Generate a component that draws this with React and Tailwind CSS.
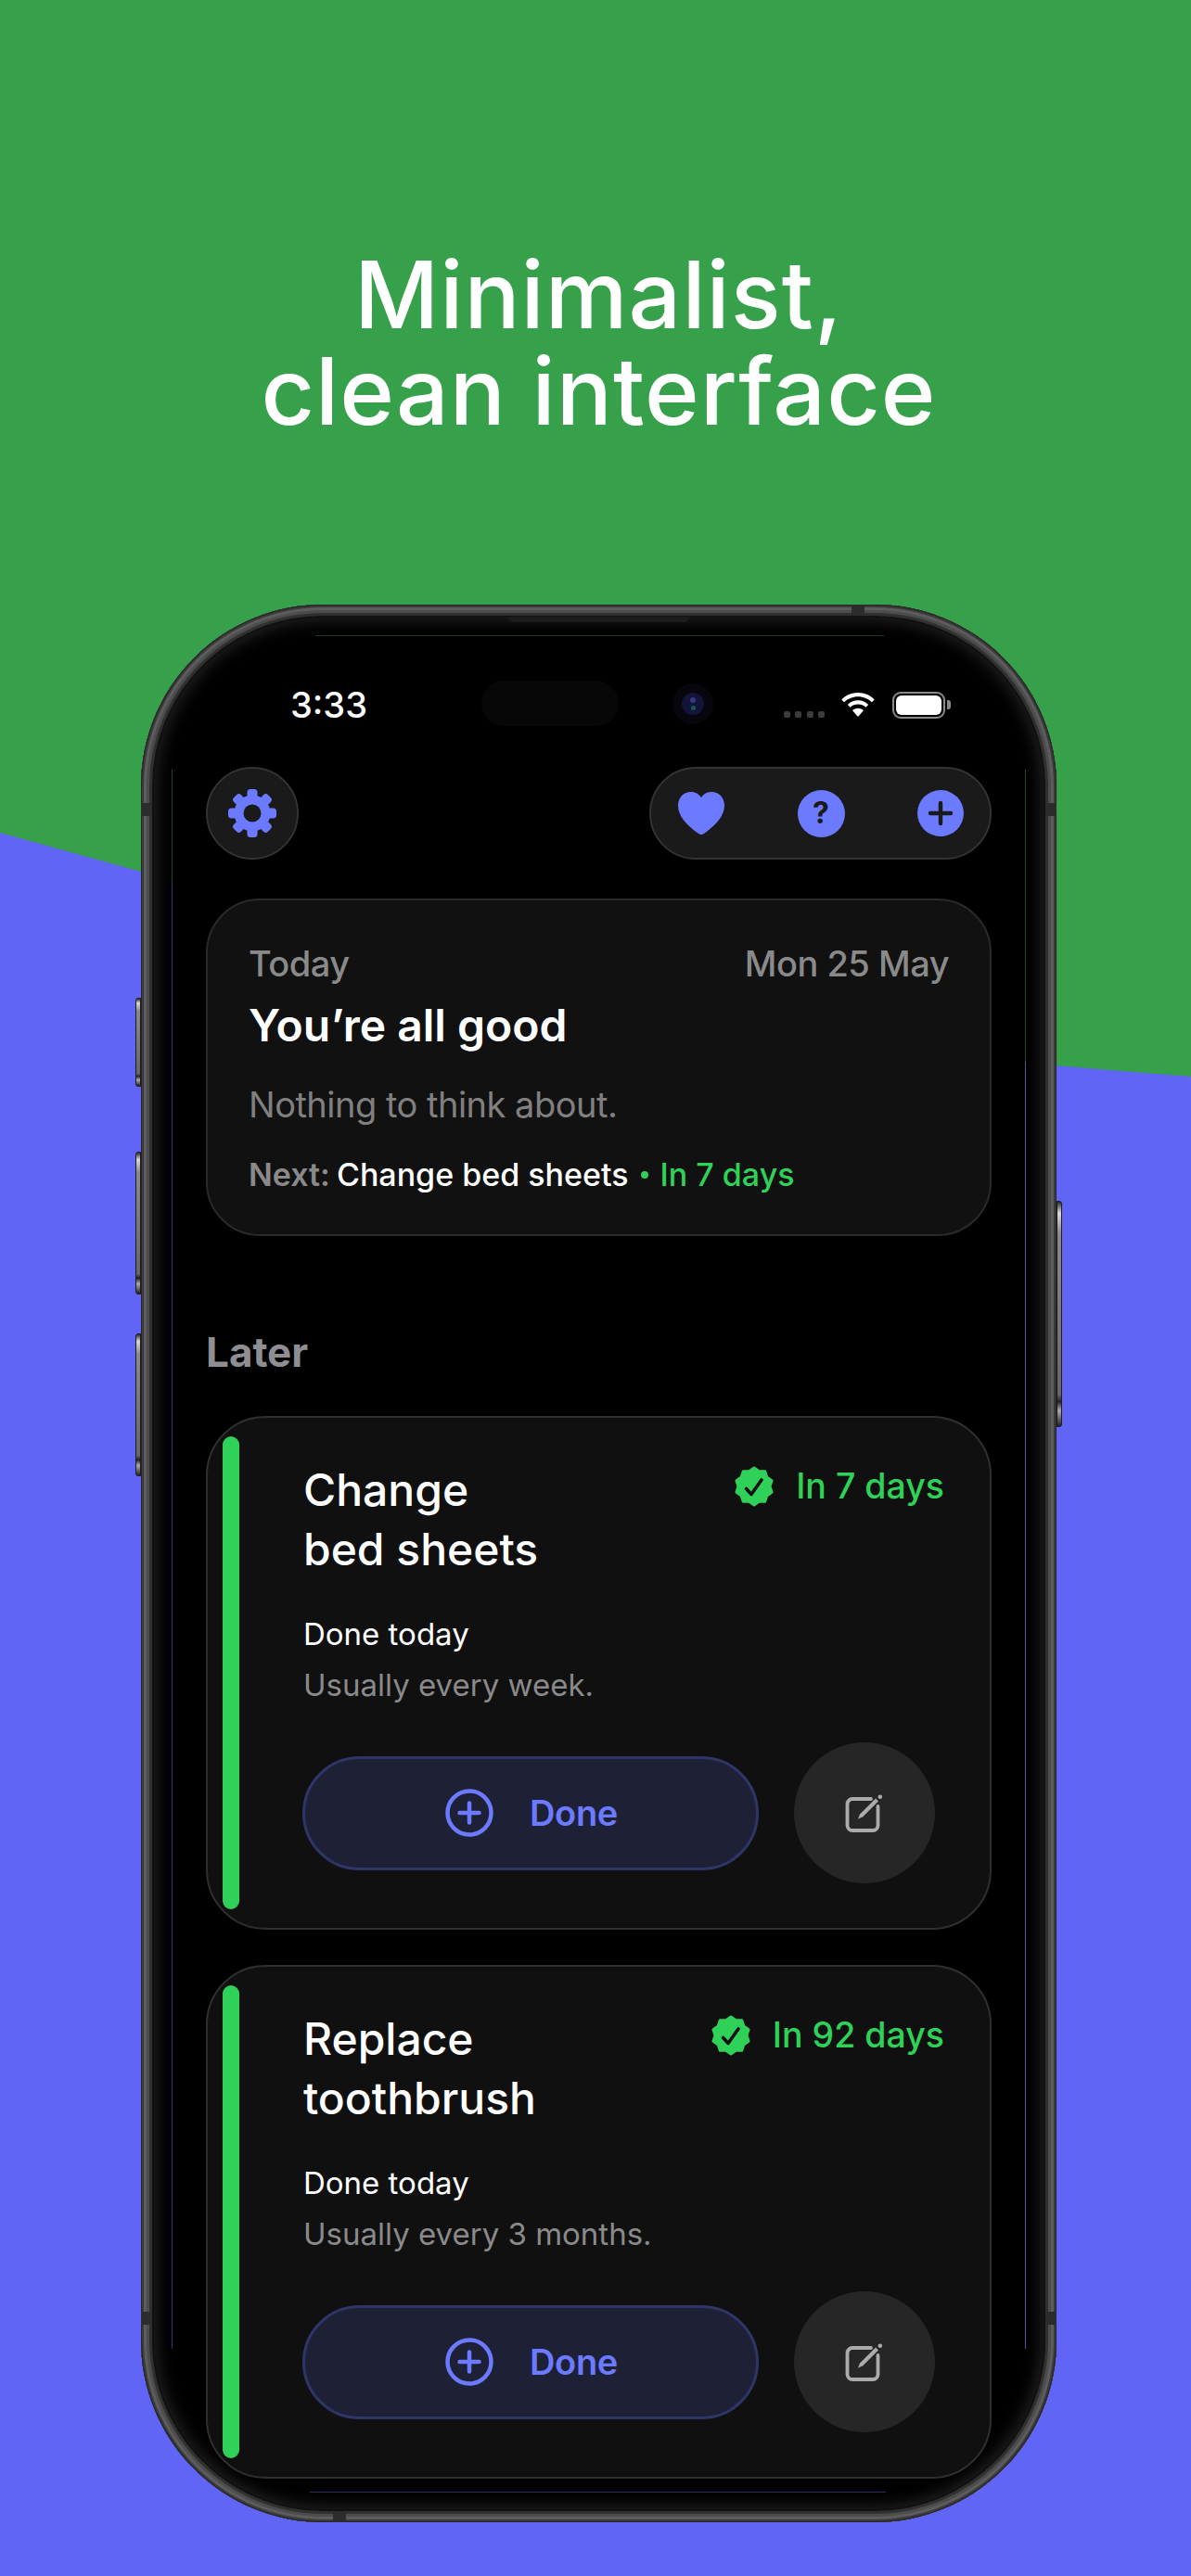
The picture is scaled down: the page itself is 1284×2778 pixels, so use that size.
import React from "react";

const BLUE = "#6b7aff";
const GREEN = "#30d158";

function Gear() {
  const teeth = [];
  for (let i = 0; i < 8; i++) {
    teeth.push(<rect key={i} x="20.5" y="0" width="11" height="14" rx="3.5" fill={BLUE} transform={`rotate(${i * 45} 26 26)`} />);
  }
  return (
    <svg width="52" height="52" viewBox="0 0 52 52">
      {teeth}
      <circle cx="26" cy="26" r="19.5" fill={BLUE} />
      <circle cx="26" cy="26" r="9.5" fill="#1a1a1a" />
    </svg>
  );
}

function Badge() {
  const n = 10;
  let d = "";
  for (let i = 0; i < n * 2; i++) {
    const r = i % 2 === 0 ? 20 : 17;
    const a = (i * Math.PI) / n - Math.PI / 2;
    d += `${i === 0 ? "M" : "L"}${(22 + r * Math.cos(a)).toFixed(2)} ${(22 + r * Math.sin(a)).toFixed(2)}`;
  }
  d += "Z";
  return (
    <svg width="44" height="44" viewBox="0 0 44 44">
      <path d={d} fill={GREEN} stroke={GREEN} strokeWidth="3" strokeLinejoin="round" />
      <path d="M13.500 24.500L19 30.500L30 15" fill="none" stroke="#101010" strokeWidth="3.6" strokeLinecap="round" strokeLinejoin="round" />
    </svg>
  );
}

function EditIcon() {
  return (
    <svg width="44" height="44" viewBox="0 0 44 44" fill="none">
      <path d="M29 7H9A5.500 5.500 0 0 0 3.500 12.500V35.500A5.500 5.500 0 0 0 9 41H31A5.500 5.500 0 0 0 36.500 35.500V15" stroke="#ababab" strokeWidth="3.8" strokeLinecap="round" />
      <path d="M15 28.500L17 23.500L34 6.500L37 9.500L20 26.500Z" fill="#ababab" />
      <circle cx="38.800" cy="4.800" r="2.300" fill="#ababab" />
    </svg>
  );
}

function TaskCard({ l1, l2, days, sub }) {
  return (
    <div className="relative h-[554px] shrink-0 rounded-[64px] border-2 border-[#2f2f2f] bg-[#101010] pl-[103px] pr-[49px] pt-[46px]">
      <div className="absolute left-[16px] top-[20px] bottom-[20px] w-[18px] rounded-full bg-[#30d158]" />
      <div className="flex justify-between">
        <div className="text-[48px] font-medium leading-[64px] text-white">
          {l1}
          <br />
          {l2}
        </div>
        <div className="-mt-px flex h-[58px] items-center gap-[23px] text-[37.5px] font-medium text-[#30d158]">
          <Badge />
          <span>{days}</span>
        </div>
      </div>
      <div className="mt-[32px] text-[33px] leading-[54px] text-white">Done today</div>
      <div className="mt-px text-[33px] leading-[54px] text-[#8a8a8a]">{sub}</div>
      <div className="-ml-px mt-[35px] flex items-center gap-[38px]">
        <div className="flex h-[123px] w-[492px] items-center justify-center gap-[39px] rounded-full border-[3px] border-[#2f3566] bg-[#1e2136] pl-[2px]">
          <svg width="52" height="52" viewBox="0 0 52 52" fill="none" stroke={BLUE} strokeWidth="4.5" strokeLinecap="round">
            <circle cx="26" cy="26" r="23.5" />
            <path d="M26 15.500V36.500M15.500 26H36.500" />
          </svg>
          <span className="text-[38px] font-semibold tracking-[-0.3px] text-[#6b7aff]">Done</span>
        </div>
        <div className="flex h-[152px] w-[152px] items-center justify-center rounded-full bg-[#262626]">
          <EditIcon />
        </div>
      </div>
    </div>
  );
}

const sideButton = "absolute w-[6px] border border-[#1c1c1c] bg-[linear-gradient(180deg,#2a2a2a_0%,#d8d8d8_5%,#8a8a8a_14%,#666_86%,#222_89%,#aaa_93%,#222_100%)]";

export default function App() {
  return (
    <div className="relative h-[2778px] w-[1284px] overflow-hidden bg-[#36a04a] [font-family:Inter,'Liberation_Sans',sans-serif]">
      <svg className="absolute inset-0" width="1284" height="2778" viewBox="0 0 1284 2778">
        <path d="M0 898L152 940L640 1080C800 1120 1000 1138 1284 1161V2778H0Z" fill="#6065f5" />
      </svg>

      <div className="relative pl-[7px] pt-[266px] text-center text-[100px] font-medium leading-[104px] tracking-[1px] text-white">
        Minimalist,
        <br />
        clean interface
      </div>

      {/* Phone */}
      <div className="relative ml-[152px] mt-[178px] h-[2068px] w-[987px] rounded-[196px] bg-black shadow-[inset_0_0_0_1px_#262626,inset_0_0_0_3px_#3a3a3a,inset_0_0_0_6px_#5c5c5c,inset_0_0_0_9px_#4c4c4c,inset_0_0_0_12px_#303030,inset_0_0_0_14px_#111,inset_0_0_18px_16px_#262626]">
        {/* side buttons */}
        <div className={`${sideButton} -left-[6px] top-[424px] h-[96px] rounded-l-[3px]`} />
        <div className={`${sideButton} -left-[6px] top-[590px] h-[154px] rounded-l-[3px]`} />
        <div className={`${sideButton} -left-[6px] top-[786px] h-[154px] rounded-l-[3px]`} />
        <div className={`${sideButton} -right-[6px] top-[643px] h-[244px] rounded-r-[3px]`} />

        {/* antenna bands */}
        <div className="absolute left-0 top-[214px] h-[14px] w-[12px] bg-[#2c2c2c]" />
        <div className="absolute right-0 top-[214px] h-[14px] w-[12px] bg-[#2c2c2c]" />
        <div className="absolute left-0 top-[1841px] h-[14px] w-[12px] bg-[#2c2c2c]" />
        <div className="absolute right-0 top-[1841px] h-[14px] w-[12px] bg-[#2c2c2c]" />
        <div className="absolute left-[766px] top-0 h-[12px] w-[14px] bg-[#2c2c2c]" />
        <div className="absolute bottom-0 left-[207px] h-[12px] w-[14px] bg-[#2c2c2c]" />

        {/* speaker groove */}
        <div className="absolute left-[396px] top-[13px] h-[6px] w-[195px] rounded-b-[5px] bg-[#1c1c1c]" />

        {/* hairlines */}
        <div className="absolute left-[33px] top-[178px] h-[120px] w-px bg-[#1e4a28]" />
        <div className="absolute left-[33px] top-[298px] h-[1583px] w-px bg-[#34347a]" />
        <div className="absolute left-[953px] top-[178px] h-[315px] w-px bg-[#1e4a28]" />
        <div className="absolute left-[953px] top-[493px] h-[1388px] w-px bg-[#55509c]" />
        <div className="absolute left-[188px] top-[33px] h-px w-[613px] bg-[#163a1f]" />
        <div className="absolute left-[182px] top-[2035px] h-px w-[621px] bg-[#2c2c66]" />

        <div className="relative flex h-full flex-col px-[70px]">
          {/* status bar */}
          <div className="relative flex h-[175px] shrink-0 items-center pl-[91px] pr-[44px] pt-[41px]">
            <span className="text-[38px] font-medium text-white">3:33</span>
            <div className="absolute left-[297px] top-[82px] h-[49px] w-[148px] rounded-full bg-[#070707]" />
            <div className="absolute left-[503px] top-[85px] flex h-[44px] w-[44px] items-center justify-center rounded-full bg-[#07060c]">
              <div className="flex h-[24px] w-[24px] flex-col items-center justify-center gap-[3px] rounded-full bg-[#12143a]">
                <i className="h-[6px] w-[6px] rounded-full bg-[#3a3a7a]" />
                <i className="h-[5px] w-[5px] rounded-full bg-[#155a50]" />
              </div>
            </div>
            <div className="ml-auto flex items-center">
              <div className="mt-[20px] flex gap-[5.4px]">
                <i className="h-[7px] w-[7px] rounded-[2px] bg-[#3c3c3c]" />
                <i className="h-[7px] w-[7px] rounded-[2px] bg-[#3c3c3c]" />
                <i className="h-[7px] w-[7px] rounded-[2px] bg-[#3c3c3c]" />
                <i className="h-[7px] w-[7px] rounded-[2px] bg-[#3c3c3c]" />
              </div>
              <svg width="38" height="28" viewBox="0 0 40 30" className="ml-[17px]">
                <path d="M20 1C12 1 6 4 1 9L4 12C8 8 14 5.500 20 5.500S32 8 36 12L39 9C34 4 28 1 20 1Z" fill="#fff" />
                <path d="M20 10C15 10 11 12 8 15L11 18C13.500 15.700 16.500 14.500 20 14.500S26.500 15.700 29 18L32 15C29 12 25 10 20 10Z" fill="#fff" />
                <path d="M20 19C17.500 19 15.300 20 13.500 21.500L20 29L26.500 21.500C24.700 20 22.500 19 20 19Z" fill="#fff" />
              </svg>
              <div className="ml-[18px] flex items-center">
                <div className="h-[29px] w-[57px] rounded-[9px] border-2 border-[#8a8a8a] p-[2px]">
                  <div className="h-full w-full rounded-[6px] bg-white" />
                </div>
                <div className="ml-[2px] h-[10px] w-[4px] rounded-r-[3px] bg-[#8a8a8a]" />
              </div>
            </div>
          </div>

          {/* toolbar */}
          <div className="flex shrink-0 justify-between">
            <div className="flex h-[100px] w-[100px] items-center justify-center rounded-full border-2 border-[#333] bg-[#1a1a1a]">
              <Gear />
            </div>
            <div className="flex h-[100px] w-[369px] items-center justify-between rounded-full border-2 border-[#333] bg-[#1a1a1a] pl-[29px] pr-[28px]">
              <svg width="50" height="46" viewBox="0 0 50 46">
                <path d="M25 46C24 46 22.500 45.300 21 44.200C9 35.500 0 26 0 14.500C0 6 6.200 0 14 0C18.700 0 22.500 2.300 25 6C27.500 2.300 31.300 0 36 0C43.800 0 50 6 50 14.500C50 26 41 35.500 29 44.200C27.500 45.300 26 46 25 46Z" fill={BLUE} />
              </svg>
              <div className="flex h-[51px] w-[51px] items-center justify-center rounded-full bg-[#6b7aff] text-[32px] font-bold text-[#1a1a1a]">?</div>
              <svg width="50" height="50" viewBox="0 0 50 50">
                <circle cx="25" cy="25" r="25" fill={BLUE} />
                <path d="M14 25H36M25 14V36" stroke="#1a1a1a" strokeWidth="4.4" strokeLinecap="round" />
              </svg>
            </div>
          </div>

          {/* today */}
          <div className="mt-[42px] h-[364px] shrink-0 rounded-[58px] border-2 border-[#2a2a2a] bg-[#111] px-[44px] pt-[45px]">
            <div className="flex justify-between text-[38px] font-medium leading-[46px] tracking-[-0.5px] text-[#8a8a8a]">
              <span>Today</span>
              <span>Mon 25 May</span>
            </div>
            <div className="mt-[14px] text-[48px] font-semibold leading-[60px] text-white">You’re all good</div>
            <div className="mt-[32px] text-[38px] leading-[46px] tracking-[-0.5px] text-[#808080]">Nothing to think about.</div>
            <div className="mt-[31px] flex items-center text-[34px] font-medium leading-[44px] text-white">
              <span className="font-semibold text-[#8a8a8a]">Next:</span>
              <span className="ml-[7px]">Change bed sheets</span>
              <i className="ml-[13px] h-[8px] w-[8px] rounded-full bg-[#30d158]" />
              <span className="ml-[13px] text-[#30d158]">In 7 days</span>
            </div>
          </div>

          <div className="mt-[99px] text-[44px] font-bold leading-[52px] text-[#8e8e93]">Later</div>

          <div className="mt-[43px] flex flex-col gap-[38px]">
            <TaskCard l1="Change" l2="bed sheets" days="In 7 days" sub="Usually every week." />
            <TaskCard l1="Replace" l2="toothbrush" days="In 92 days" sub="Usually every 3 months." />
          </div>
        </div>
      </div>
    </div>
  );
}
